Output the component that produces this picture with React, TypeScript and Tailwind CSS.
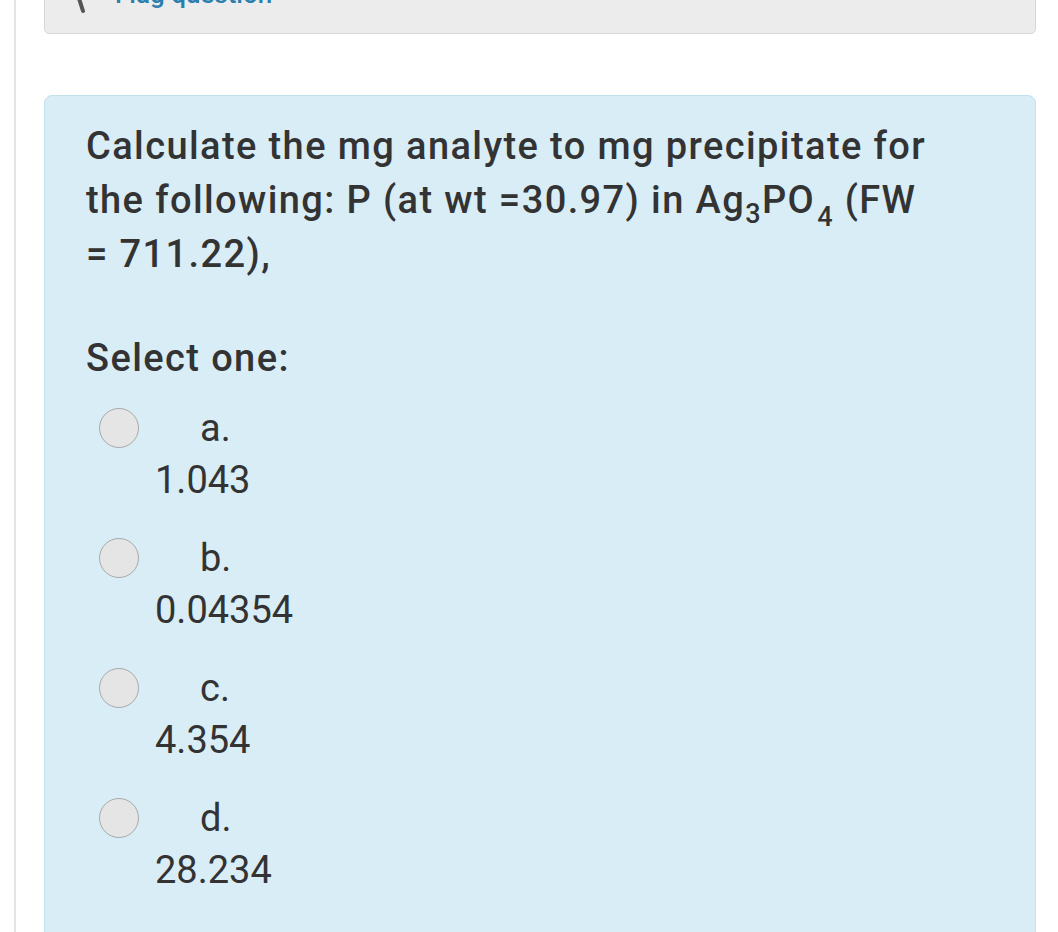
import React from 'react';

const options = [
  { letter: 'a.', value: '1.043' },
  { letter: 'b.', value: '0.04354' },
  { letter: 'c.', value: '4.354' },
  { letter: 'd.', value: '28.234' },
];

export default function App() {
  return (
    <div className="w-[1058px] h-[932px] overflow-hidden bg-white" style={{ fontFamily: 'Roboto, "Liberation Sans", sans-serif' }}>
      <div className="ml-[14px] flex h-[1000px] flex-col border-l-2 border-[#e3e3e3] pl-[28px] pr-[22px]">
        {/* flag question bar, cut off at the top */}
        <div className="-mt-[40px] h-[74px] shrink-0 rounded-[5px] border border-[#d6d6d6] bg-[#ececec] relative">
          <svg className="absolute left-[26px] top-[26px]" width="20" height="28" viewBox="0 0 20 28">
            <path d="M5 2 L12 24" stroke="#555" strokeWidth="4" strokeLinecap="round" />
          </svg>
          <span className="absolute left-[70px] top-[20px] text-[26px] font-medium text-[#2a7fae] leading-[26px]">
            Flag question
          </span>
        </div>

        <div className="mt-[61px] h-[900px] shrink-0 rounded-[8px] border border-[#bfe1ec] bg-[#d9edf7] pl-[41px] pr-[40px] pt-[23px] text-[#333333]">
          <p className="text-[38px] font-medium leading-[54px] tracking-[1.4px]">
            Calculate the mg analyte to mg precipitate for
            <br />
            the following: P (at wt =30.97) in Ag
            <span className="relative top-[10px] text-[27px] leading-none">3</span>
            PO
            <span className="relative top-[13px] ml-[2px] text-[27px] leading-none">4</span> (FW
            <br />= 711.22),
          </p>

          <div className="mt-[50px] text-[38px] font-medium leading-[54px] tracking-[1.4px]">Select one:</div>

          <div className="mt-[23px] flex flex-col gap-[31px]">
            {options.map((o) => (
              <div key={o.letter}>
                <div className="flex h-[40px] items-center">
                  <div className="ml-[13px] h-[40px] w-[40px] rounded-full border border-[#a9a9a9] bg-[#e5e5e5]" />
                  <span className="ml-[61px] text-[38px] leading-[54px]">{o.letter}</span>
                </div>
                <div className="mt-[5px] pl-[69px] text-[38px] leading-[54px]">{o.value}</div>
              </div>
            ))}
          </div>
        </div>
      </div>
    </div>
  );
}
